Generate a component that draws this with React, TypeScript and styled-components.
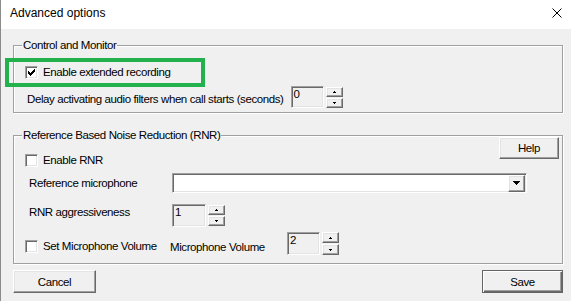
import React from "react";
import styled, { createGlobalStyle, css } from "styled-components";

const UI = `"Liberation Sans", Arial, sans-serif`;

const GlobalStyle = createGlobalStyle`
  html, body { margin: 0; padding: 0; background: #f0f0f0; }
  * { box-sizing: border-box; }
`;

const Window = styled.div`
  position: relative;
  width: 571px;
  height: 301px;
  background: #f0f0f0;
  border-left: 1px solid #8c8c8c;
  overflow: hidden;
  font-family: ${UI};
  font-size: 11.5px;
  letter-spacing: -0.4px;
  line-height: 14px;
  color: #000;
`;

const TitleBar = styled.div`
  height: 29px;
  background: #fff;
  display: flex;
  align-items: center;
  justify-content: space-between;
  padding: 0 9px 3px 9px;
`;

const TitleText = styled.span`
  font-size: 12px;
  letter-spacing: 0;
`;

const Body = styled.div`
  padding: 16px 8px 0 12px;
`;

const GroupBox = styled.div<{ $mt?: number; $pt: number; $pb: number }>`
  position: relative;
  margin-top: ${(p) => p.$mt ?? 0}px;
  padding: ${(p) => p.$pt}px 0 ${(p) => p.$pb}px 11px;
  border: 1px solid #a0a0a0;
  box-shadow: 1px 1px 0 #fff, inset 1px 1px 0 #fff;
`;

const Legend = styled.span`
  position: absolute;
  top: -8px;
  left: 8px;
  padding: 0 1px;
  background: #f0f0f0;
  white-space: nowrap;
`;

const Row = styled.div<{ $mt?: number; $align?: string; $justify?: string }>`
  display: flex;
  align-items: ${(p) => p.$align ?? "flex-start"};
  justify-content: ${(p) => p.$justify ?? "flex-start"};
  margin-top: ${(p) => p.$mt ?? 0}px;
`;

const CheckRow = styled.label<{ $mt?: number; $w?: number }>`
  display: flex;
  align-items: center;
  gap: 5px;
  height: 14px;
  flex-shrink: 0;
  margin-top: ${(p) => p.$mt ?? 0}px;
  ${(p) => p.$w && css`width: ${p.$w}px;`}
  white-space: nowrap;
`;

const CheckBoxFrame = styled.span`
  width: 13px;
  height: 13px;
  display: flex;
  align-items: center;
  justify-content: center;
  background: #fff;
  border: 1px solid;
  border-color: #a0a0a0 #fff #fff #a0a0a0;
  box-shadow: inset 1px 1px 0 #696969, inset -1px -1px 0 #e3e3e3;
`;

const Label = styled.span<{ $w?: number; $ml?: number; $mt?: number }>`
  display: block;
  flex-shrink: 0;
  white-space: nowrap;
  ${(p) => p.$w && css`width: ${p.$w}px;`}
  margin-left: ${(p) => p.$ml ?? 0}px;
  margin-top: ${(p) => p.$mt ?? 0}px;
`;

const SpinField = styled.div<{ $ml?: number }>`
  display: flex;
  gap: 2px;
  margin-left: ${(p) => p.$ml ?? 0}px;
`;

const sunken = css`
  border: 1px solid;
  border-color: #a0a0a0 #fff #fff #a0a0a0;
  box-shadow: inset 1px 1px 0 #696969, inset -1px -1px 0 #e3e3e3;
`;

const raised = css`
  border: 1px solid;
  border-color: #fff #696969 #696969 #fff;
  box-shadow: inset -1px -1px 0 #a0a0a0, inset 1px 1px 0 #e3e3e3;
  background: #f0f0f0;
`;

const NumberBox = styled.span<{ $w: number; $h: number }>`
  ${sunken};
  display: block;
  width: ${(p) => p.$w}px;
  height: ${(p) => p.$h}px;
  background: #f0f0f0;
  padding: 0 0 0 2px;
`;

const Spinner = styled.div<{ $h: number; $mt?: number }>`
  display: flex;
  flex-direction: column;
  width: 17px;
  height: ${(p) => p.$h}px;
  margin-top: ${(p) => p.$mt ?? 0}px;
  gap: 1px;
`;

const SpinButton = styled.span`
  ${raised};
  flex: 1;
  display: flex;
  align-items: center;
  justify-content: center;
`;

const Combo = styled.div<{ $w: number }>`
  ${sunken};
  width: ${(p) => p.$w}px;
  height: 20px;
  background: #fff;
  display: flex;
  align-items: center;
  justify-content: flex-end;
  padding-right: 1px;
`;

const DropButton = styled.span`
  ${raised};
  width: 17px;
  height: 17px;
  display: flex;
  align-items: center;
  justify-content: center;
`;

const Button = styled.button<{ $w: number; $h: number; $mr?: number; $default?: boolean }>`
  ${raised};
  width: ${(p) => p.$w}px;
  height: ${(p) => p.$h}px;
  margin-right: ${(p) => p.$mr ?? 0}px;
  padding: 0;
  font-family: ${UI};
  font-size: 11.5px;
  letter-spacing: -0.4px;
  color: #000;
  flex-shrink: 0;
  ${(p) =>
    p.$default &&
    css`
      border: 1px solid #646464;
      box-shadow: inset 1px 1px 0 #fff, inset -1px -1px 0 #696969, inset -2px -2px 0 #a0a0a0;
    `}
`;

const Footer = styled.div`
  display: flex;
  justify-content: space-between;
  margin-top: 6px;
`;

const Highlight = styled.div`
  position: absolute;
  left: 4px;
  top: 58px;
  width: 200px;
  height: 29px;
  border: 4px solid #22b14c;
  pointer-events: none;
`;

const CloseIcon = () => (
  <svg width="10" height="10" viewBox="0 0 10 10">
    <path d="M0.5 0.5L9.5 9.5M9.5 0.5L0.5 9.5" stroke="#000" strokeWidth="1" />
  </svg>
);

const CheckMark = () => (
  <svg width="7" height="7" viewBox="0 0 7 7" shapeRendering="crispEdges">
    <path
      fill="#000"
      d="M6 0h1v1H6z M5 1h2v1H5z M0 2h1v1H0z M4 2h3v1H4z M0 3h2v1H0z M3 3h3v1H3z M0 4h5v1H0z M1 5h3v1H1z M2 6h1v1H2z"
    />
  </svg>
);

const UpArrow = () => (
  <svg width="3" height="2" viewBox="0 0 3 2" shapeRendering="crispEdges">
    <path fill="#000" d="M1 0h1v1H1z M0 1h3v1H0z" />
  </svg>
);

const DownArrow = () => (
  <svg width="3" height="2" viewBox="0 0 3 2" shapeRendering="crispEdges">
    <path fill="#000" d="M0 0h3v1H0z M1 1h1v1H1z" />
  </svg>
);

const ComboArrow = () => (
  <svg width="7" height="4" viewBox="0 0 7 4" shapeRendering="crispEdges">
    <path fill="#000" d="M0 0h7v1H0z M1 1h5v1H1z M2 2h3v1H2z M3 3h1v1H3z" />
  </svg>
);

const CheckBox = ({ checked }: { checked?: boolean }) => (
  <CheckBoxFrame>{checked && <CheckMark />}</CheckBoxFrame>
);

const Spin = ({ value, w, h, sh, smt, ml }: { value: string; w: number; h: number; sh: number; smt?: number; ml?: number }) => (
  <SpinField $ml={ml}>
    <NumberBox $w={w} $h={h}>{value}</NumberBox>
    <Spinner $h={sh} $mt={smt}>
      <SpinButton><UpArrow /></SpinButton>
      <SpinButton><DownArrow /></SpinButton>
    </Spinner>
  </SpinField>
);

export default function App() {
  return (
    <>
      <GlobalStyle />
      <Window>
        <TitleBar>
          <TitleText>Advanced options</TitleText>
          <CloseIcon />
        </TitleBar>
        <Body>
          <GroupBox $pt={19} $pb={4}>
            <Legend>Control and Monitor</Legend>
            <CheckRow>
              <CheckBox checked />
              <span>Enable extended recording</span>
            </CheckRow>
            <Row $mt={7}>
              <Label $ml={2} $mt={6}>Delay activating audio filters when call starts (seconds)</Label>
              <Spin value="0" w={33} h={22} sh={21} smt={1} ml={7} />
            </Row>
          </GroupBox>

          <GroupBox $mt={22} $pt={1} $pb={8}>
            <Legend>Reference Based Noise Reduction (RNR)</Legend>
            <Row $justify="space-between">
              <CheckRow $mt={16}>
                <CheckBox />
                <span>Enable RNR</span>
              </CheckRow>
              <Button $w={60} $h={22} $mr={3}>Help</Button>
            </Row>
            <Row $mt={6} $align="center">
              <Label $w={143} $ml={4}>Reference microphone</Label>
              <Combo $w={355}>
                <DropButton><ComboArrow /></DropButton>
              </Combo>
            </Row>
            <Row $mt={11}>
              <Label $w={143} $ml={4} $mt={1}>RNR aggressiveness</Label>
              <Spin value="1" w={34} h={23} sh={21} smt={1} />
            </Row>
            <Row $mt={5}>
              <CheckRow $mt={7} $w={145}>
                <CheckBox />
                <span>Set Microphone Volume</span>
              </CheckRow>
              <Label $w={117} $mt={8}>Microphone Volume</Label>
              <Spin value="2" w={33} h={23} sh={23} />
            </Row>
          </GroupBox>

          <Footer>
            <Button $w={83} $h={23}>Cancel</Button>
            <Button $w={81} $h={23} $default>Save</Button>
          </Footer>
        </Body>
        <Highlight />
      </Window>
    </>
  );
}
